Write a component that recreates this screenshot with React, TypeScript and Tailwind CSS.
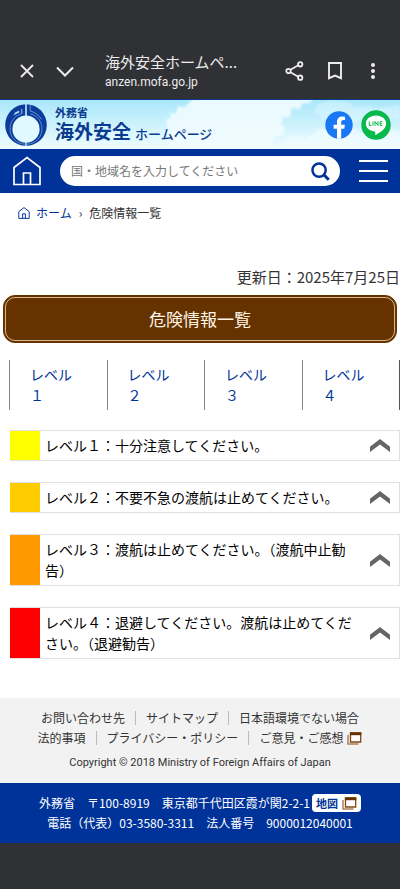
import React from 'react'

const levels = [
  { id: 'level1', num: '１', color: 'bg-[#ffff00]', text: 'レベル１：十分注意してください。' },
  { id: 'level2', num: '２', color: 'bg-[#ffcc00]', text: 'レベル２：不要不急の渡航は止めてください。' },
  { id: 'level3', num: '３', color: 'bg-[#ff9900]', text: 'レベル３：渡航は止めてください。（渡航中止勧告）' },
  { id: 'level4', num: '４', color: 'bg-[#ff0000]', text: 'レベル４：退避してください。渡航は止めてください。（退避勧告）' },
]

const HouseIcon = ({ className, stroke }: { className: string; stroke: number }) => (
  <svg viewBox="0 0 28 30" className={className} fill="none" stroke="currentColor" strokeWidth={stroke} aria-hidden="true">
    <path d="M1 28.5V11.5L14 1.5L27 11.5V28.5Z" />
    <path d="M10.5 28V17H17.5V28" />
  </svg>
)

const WindowIcon = () => (
  <svg viewBox="0 0 15 13" className="inline-block h-[13px] w-[15px]" aria-hidden="true">
    <path d="M1 3V12H11.5" fill="none" stroke="#a8835a" strokeWidth="1.5" />
    <path d="M3.5 1H13.7V10H3.5Z" fill="#fff" stroke="#7d4a12" strokeWidth="1.3" />
    <path d="M2.9 0.4H14.3V3.2H2.9Z" fill="#663300" />
  </svg>
)

const BrowserBar = () => (
  <div className="flex h-[99px] items-end bg-[#303135] pb-2 pl-[15px] pr-[19px] text-[#ececec]">
    <div className="flex h-10 w-full items-center">
      <button type="button" aria-label="閉じる" className="flex w-6 justify-center">
        <svg viewBox="0 0 14 14" className="h-3.5 w-3.5" fill="none" stroke="currentColor" strokeWidth="1.8"><path d="M1 1L13 13M13 1L1 13" /></svg>
      </button>
      <button type="button" aria-label="最小化" className="ml-4 flex w-5 justify-center">
        <svg viewBox="0 0 18 11" className="h-[11px] w-[18px]" fill="none" stroke="currentColor" strokeWidth="2"><path d="M1 1.5L9 9.5L17 1.5" /></svg>
      </button>
      <div className="ml-[30px] min-w-0 flex-1">
        <p className="whitespace-nowrap text-[15px] leading-[22px]">海外安全ホームペ...</p>
        <p className="font-[Roboto,sans-serif] text-xs leading-[18px]">anzen.mofa.go.jp</p>
      </div>
      <div className="flex items-center">
        <button type="button" aria-label="共有" className="flex w-5 justify-center">
          <svg viewBox="0 0 20 20" className="h-5 w-5" fill="none" stroke="currentColor" strokeWidth="1.8">
            <path d="M5.5 8.8L13.2 4.3M5.5 11.2L13.2 15.7" />
            <circle cx="3.5" cy="10" r="2.2" />
            <circle cx="15.2" cy="3.3" r="2.2" />
            <circle cx="15.2" cy="16.7" r="2.2" />
          </svg>
        </button>
        <button type="button" aria-label="ブックマーク" className="ml-5 flex w-5 justify-center">
          <svg viewBox="0 0 14 18" className="h-[18px] w-3.5" fill="none" stroke="currentColor" strokeWidth="1.9"><path d="M1 1H13V16.2L7 13.6L1 16.2Z" /></svg>
        </button>
        <button type="button" aria-label="メニュー" className="ml-5 flex w-4 justify-center">
          <svg viewBox="0 0 4 18" className="h-[18px] w-1" fill="currentColor"><circle cx="2" cy="3" r="2" /><circle cx="2" cy="9" r="2" /><circle cx="2" cy="15" r="2" /></svg>
        </button>
      </div>
    </div>
  </div>
)

const Sky = () => (
  <svg viewBox="0 0 400 50" preserveAspectRatio="none" className="absolute inset-0 h-full w-full" aria-hidden="true">
    <defs>
      <linearGradient id="sky" x1="0" y1="0" x2="0" y2="1">
        <stop offset="0" stopColor="#a9e7fb" />
        <stop offset="1" stopColor="#f0fdff" />
      </linearGradient>
      <filter id="soft"><feGaussianBlur stdDeviation="1.2" /></filter>
    </defs>
    <path d="M0 0H400V50H0Z" fill="url(#sky)" />
    <g fill="#f1fcff" filter="url(#soft)">
      <path d="M170 50L166 20L171 18L170 13L176 14L178 6L184 8L190 2L196 -4H314L310 3L302 4L300 10L292 8L290 18L284 17L281 25L285 29L283 36L275 37L272 42L268 54Z" opacity="0.9" />
      <path d="M318 4L330 0L350 3L354 8L366 6L378 9L400 5V20L388 17L380 22L364 19L350 25L332 18L324 20L314 12Z" opacity="0.35" />
      <path d="M270 54L282 44L292 36L306 39L320 29L336 33L352 28L366 36L382 29L400 32V54Z" opacity="0.7" />
    </g>
  </svg>
)

const Emblem = () => (
  <svg viewBox="0 0 42 42" className="h-[42px] w-[42px] shrink-0" aria-hidden="true">
    <circle cx="21" cy="21" r="20.8" fill="#0b3b9b" />
    <circle cx="21" cy="25.2" r="13.6" fill="#e0f8ff" />
    <path d="M21 0V12" stroke="#d4f4ff" strokeWidth="1.5" />
    <path d="M21 38V42" stroke="#d4f4ff" strokeWidth="1.3" />
    <path d="M16.5 9.8C9 12 5 18 5 25C5 33.5 11.5 39.8 20 40.2" fill="none" stroke="#84aedb" strokeWidth="0.7" />
    <path d="M25.5 9.8C33 12 37 18 37 25C37 33.5 30.5 39.8 22 40.2" fill="none" stroke="#84aedb" strokeWidth="0.7" />
    <path d="M8.2 11.5L10.2 8.6L14.2 6.6V8.6Z" fill="#b7def3" />
    <path d="M16.8 4.8V9.8" stroke="#b7def3" strokeWidth="0.9" />
    <path d="M25.2 0.8V7C30 8.2 34 11.2 36.6 15.5" fill="none" stroke="#84aedb" strokeWidth="0.8" />
  </svg>
)

const SiteHeader = () => (
  <header>
    <div className="relative border-t border-[#0b3b8f]">
      <Sky />
      <div className="relative flex h-[49px] items-center justify-between pl-[5px] pr-[9px]">
        <a href="#top" className="flex items-center gap-2 text-[#0b3b8f]">
          <Emblem />
          <span className="block font-bold">
            <span className="block text-[11px] leading-[15px]">外務省</span>
            <span className="flex items-baseline gap-1 whitespace-nowrap text-[19px] leading-[22px]">
              海外安全<span className="text-[13px] font-medium">ホームページ</span>
            </span>
          </span>
        </a>
        <div className="flex items-center gap-2">
          <a href="#facebook" aria-label="Facebook">
            <svg viewBox="0 0 28 28" className="h-7 w-7">
              <circle cx="14" cy="14" r="13.7" fill="#1877f2" />
              <path d="M12 27.7V17.8H8.6V13.8H12V10.8C12 7.3 14.1 5.4 17.2 5.4C18.7 5.4 20.1 5.7 20.1 5.7V9H18.5C16.8 9 16.2 10 16.2 11.2V13.8H19.9L19.3 17.8H16.2V27.7Z" fill="#fff" />
            </svg>
          </a>
          <a href="#line" aria-label="LINE">
            <svg viewBox="0 0 30 30" className="h-[30px] w-[30px]">
              <circle cx="15" cy="15" r="14.7" fill="#06b94b" />
              <path d="M15 5.5C9.2 5.5 4.8 9.1 4.8 13.6C4.8 17.7 8.4 20.9 13.3 21.6C14.6 21.9 14.4 22.7 14.2 24.2C14.1 24.9 14.5 25.1 15.2 24.7C18.5 22.9 25.2 19 25.2 13.6C25.2 9.1 20.8 5.5 15 5.5Z" fill="#fff" />
              <path d="M8.3 11.5V15.5H10.4M12 11.5V15.7M14 15.7V11.5L17 15.5V11.3M21.3 11.7H19.2V15.5H21.3M19.2 13.6H21" fill="none" stroke="#06b94b" strokeWidth="1" />
            </svg>
          </a>
        </div>
      </div>
    </div>
    <div className="flex h-11 items-center bg-[#003399] px-3">
      <a href="#home" aria-label="ホーム" className="text-white">
        <HouseIcon className="h-[30px] w-[30px]" stroke={1.7} />
      </a>
      <form className="ml-[18px] mr-[19px] flex h-[30px] min-w-0 flex-1 items-center rounded-full bg-white pl-[11px] pr-2.5">
        <input
          type="text"
          aria-label="国・地域名"
          placeholder="国・地域名を入力してください"
          className="min-w-0 flex-1 bg-transparent text-xs placeholder:text-[#777]"
        />
        <button type="button" aria-label="検索" className="text-[#003399]">
          <svg viewBox="0 0 20 20" className="h-[19px] w-[19px]" fill="none" stroke="currentColor" strokeWidth="2.6"><circle cx="8.5" cy="8.5" r="7" /><path d="M13.2 13.2L18.7 18.7" strokeWidth="3.2" /></svg>
        </button>
      </form>
      <button type="button" aria-label="メニューを開く" className="flex w-[29px] flex-col gap-2">
        <span className="h-0.5 bg-white" />
        <span className="h-0.5 bg-white" />
        <span className="h-0.5 bg-white" />
      </button>
    </div>
  </header>
)

const FooterLink = ({ children }: { children: React.ReactNode }) => (
  <li className="flex h-3.5 items-center whitespace-nowrap px-2.5 leading-5 first:pl-0 last:pr-0 [&+li]:border-l [&+li]:border-[#bbb]">
    <a href="#footer" className="flex items-center gap-1">{children}</a>
  </li>
)

const App = () => {
  return (
    <div id="top" className="flex min-h-screen flex-col bg-white font-['Noto_Sans_CJK_JP',sans-serif] text-[#333]" lang="ja">
      <BrowserBar />
      <SiteHeader />
      <main className="pb-[39px]">
        <nav className="flex items-center px-[18px] pt-2.5 text-xs leading-5" aria-label="パンくず">
          <a href="#home" className="flex items-center gap-1.5 text-[#003399]">
            <HouseIcon className="h-3 w-3" stroke={2.4} />
            ホーム
          </a>
          <span className="mx-[7px]">›</span>
          <span>危険情報一覧</span>
        </nav>
        <p className="mt-11 text-right text-[15px] leading-5">更新日：2025年7月25日</p>
        <h1 className="mx-[3px] mt-2 rounded-xl border border-[#663300] bg-[#663300] p-px text-center text-[17px] text-[#fff5e8]">
          <span className="block rounded-[10px] border border-[#d9b98c] leading-[42px]">危険情報一覧</span>
        </h1>
        <ul className="ml-[9px] mt-[17px] grid grid-cols-4 border-r border-[#555]">
          {levels.map((l) => (
            <li key={l.id} className="border-l border-[#888]">
              <a href={'#' + l.id} className="block py-1 pl-5 text-sm leading-[21px] text-[#003399]">
                <span className="block">レベル</span>
                <span className="block">{l.num}</span>
              </a>
            </li>
          ))}
        </ul>
        <div className="ml-[10px] mt-5 flex flex-col gap-[21px]">
          {levels.map((l) => (
            <section key={l.id} id={l.id} className="flex border border-l-0 border-[#e0e0e0]">
              <div className={'w-[30px] shrink-0 ' + l.color} />
              <button type="button" className="flex flex-1 items-center justify-between py-1 pl-[5px] pr-[9px] text-left text-black">
                <span className="max-w-[312px] text-sm leading-[21px]">{l.text}</span>
                <svg viewBox="0 0 20 13" className="h-[13px] w-5 shrink-0" fill="#666" aria-hidden="true"><path d="M10 0L20 7.8V13L10 5.4L0 13V7.8Z" /></svg>
              </button>
            </section>
          ))}
        </div>
      </main>
      <footer className="text-center text-xs">
        <div className="bg-[#f2f2f2] pb-[10px] pt-[10px]">
          <ul className="flex h-5 items-center justify-center">
            <FooterLink>お問い合わせ先</FooterLink>
            <FooterLink>サイトマップ</FooterLink>
            <FooterLink>日本語環境でない場合</FooterLink>
          </ul>
          <ul className="flex h-5 items-center justify-center">
            <FooterLink>法的事項</FooterLink>
            <FooterLink>プライバシー・ポリシー</FooterLink>
            <FooterLink>ご意見・ご感想<WindowIcon /></FooterLink>
          </ul>
          <p className="mt-[5px] font-[Roboto,sans-serif] text-[11px] leading-5">Copyright © 2018 Ministry of Foreign Affairs of Japan</p>
        </div>
        <div className="bg-[#003399] py-[10px] leading-5 text-white">
          <p className="flex items-center justify-center gap-0.5 whitespace-nowrap">
            外務省　〒100-8919　東京都千代田区霞が関2-2-1
            <a href="#map" className="flex h-[18px] items-center gap-1 rounded-sm bg-white px-1 text-[11px] font-bold text-[#003399]">
              地図<WindowIcon />
            </a>
          </p>
          <p className="whitespace-nowrap">電話（代表）03-3580-3311　法人番号　9000012040001</p>
        </div>
      </footer>
      <div className="flex-1 bg-[#303135]" />
    </div>
  )
}

export default App
